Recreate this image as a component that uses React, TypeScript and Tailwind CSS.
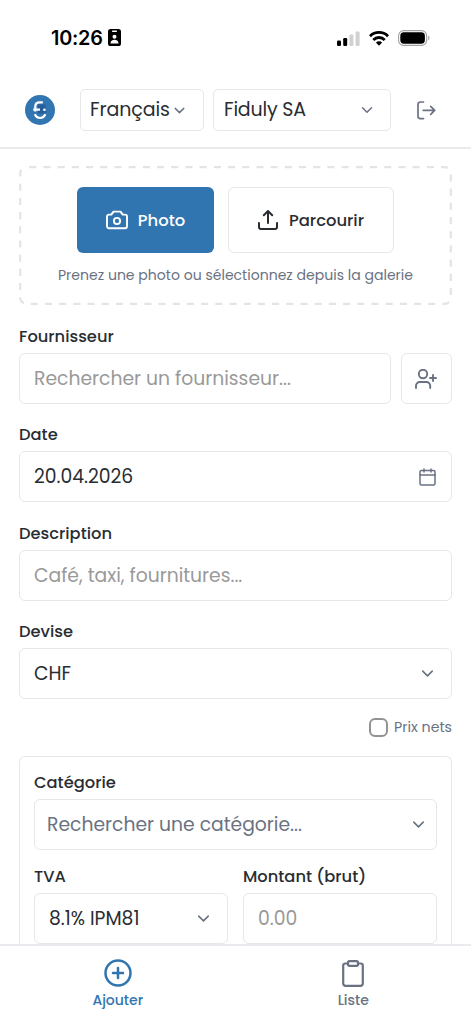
import type { ReactNode } from "react";
import { ChevronDown, CirclePlus } from "lucide-react";

const StatusBar = () => (
  <div className="flex h-[76px] items-center justify-between pl-[51px] pr-[41px]">
    <div className="flex items-center gap-[5px]">
      <span className="pt-[2px] font-['Inter',sans-serif] text-[19.8px] font-semibold leading-none tracking-[-0.2px] text-black">10:26</span>
      <svg width="13" height="17" viewBox="0 0 13 17">
        <rect width="13" height="17" rx="2.6" fill="#000" />
        <rect x="4" y="1.6" width="5" height="1.3" rx=".6" fill="#fff" />
        <circle cx="6.5" cy="7.8" r="2" fill="#fff" />
        <path d="M2.5 14.5c0-2.6 1.6-3.8 4-3.8s4 1.2 4 3.8z" fill="#fff" />
      </svg>
    </div>
    <div className="flex items-center gap-[9px]">
      <svg width="23" height="15" viewBox="0 0 23 15">
        <rect x="0" y="9.5" width="4" height="5.5" rx="1.2" fill="#000" />
        <rect x="6.2" y="7" width="4" height="8" rx="1.2" fill="#000" />
        <rect x="12.4" y="3.6" width="4" height="11.4" rx="1.2" fill="#d1d1d1" />
        <rect x="18.6" y="0.5" width="4" height="14.5" rx="1.2" fill="#d1d1d1" />
      </svg>
      <svg width="20" height="15" viewBox="0 0 20 15" fill="none" stroke="#000" strokeWidth="2.8">
        <path d="M1 5.2a12.7 12.7 0 0 1 18 0" />
        <path d="M4.3 8.9a8 8 0 0 1 11.4 0" />
        <path d="M10 14.8l-3.1-3.2a4.3 4.3 0 0 1 6.2 0z" fill="#000" stroke="none" />
      </svg>
      <svg width="32" height="16" viewBox="0 0 32 16">
        <rect x=".6" y=".6" width="28" height="14.8" rx="5" fill="none" stroke="#a3a3a3" strokeWidth="1.1" />
        <rect x="2.3" y="2.3" width="24.6" height="11.4" rx="3.6" fill="#000" />
        <path d="M30.2 5.6c1.6.6 1.6 4.2 0 4.8z" fill="#a3a3a3" />
      </svg>
    </div>
  </div>
);

const Logo = () => (
  <svg width="30" height="30" viewBox="0 0 30 30">
    <circle cx="15" cy="15" r="15" fill="#3276b1" />
    <path d="M13 9.5h7.5v9H13z" fill="#245f9c" />
    <g fill="none" stroke="#fff" strokeWidth="2.2">
      <path d="M17.8 7.3h-3c-3 0-4.5 1.6-4.5 4.2v5" />
      <path d="M8.2 14.6h6.8" />
      <path d="M9.9 19.2c.9 2.6 2.8 3.8 5.2 3.8s4.3-1.2 5.2-3.8" />
    </g>
    <circle cx="19.4" cy="14.8" r="1.3" fill="#fff" />
  </svg>
);

const Header = () => (
  <header className="flex h-[73px] items-start border-b-2 border-[#ebebed] pl-[25px] pt-[13px]">
    <div className="mt-[6px]">
      <Logo />
    </div>
    <div className="ml-[25px] flex h-[42px] w-[124px] items-center rounded-[5px] border border-gray-200 pl-[9px]">
      <span className="text-[19px] tracking-[-0.1px]">Français</span>
      <ChevronDown className="ml-px text-gray-500" size={17} />
    </div>
    <div className="ml-[9px] flex h-[42px] w-[178px] items-center justify-between rounded-[5px] border border-gray-200 pl-[10px] pr-[14px]">
      <span className="text-[19px] tracking-[-0.2px]">Fiduly SA</span>
      <ChevronDown className="text-gray-500" size={18} />
    </div>
    <svg className="ml-[26px] mt-[12px] text-gray-500" width="19" height="19" viewBox="0 0 19 19" fill="none" stroke="currentColor" strokeWidth="1.7" strokeLinecap="round" strokeLinejoin="round">
      <path d="M6.5 1H3.2A2.2 2.2 0 0 0 1 3.2v12.2a2.2 2.2 0 0 0 2.2 2.2h3.3" />
      <path d="M6.2 9.3h11.5M13.7 5.3l4 4-4 4" />
    </svg>
  </header>
);

const UploadZone = () => (
  <div className="relative flex h-[139px] flex-col items-center pt-[21px]">
    <svg className="absolute inset-0" width="433" height="139" fill="none">
      <rect x="1.2" y="1.2" width="430.6" height="136.6" rx="6" stroke="#e2e5e7" strokeWidth="2.2" strokeDasharray="7.1 7.1" strokeDashoffset="-3" />
    </svg>
    <div className="flex gap-[14px]">
      <button className="flex h-[66px] w-[137px] items-center justify-center gap-[10px] rounded-md bg-[#3175b0] text-white">
        <svg width="22" height="20" viewBox="0 0 22 20" fill="none" stroke="currentColor" strokeWidth="1.9" strokeLinejoin="round">
          <path d="M7.5 1.6h7l2.2 3h2.4a1.9 1.9 0 0 1 1.9 1.9v9.8a1.9 1.9 0 0 1-1.9 1.9H2.9A1.9 1.9 0 0 1 1 16.3V6.5a1.9 1.9 0 0 1 1.9-1.9h2.4z" />
          <circle cx="11" cy="11" r="3.1" />
        </svg>
        <span className="pt-[2px] text-[16.4px] font-medium">Photo</span>
      </button>
      <button className="flex h-[66px] w-[166px] items-center justify-center gap-[11px] rounded-md border border-gray-200">
        <svg width="20" height="20" viewBox="0 0 20 20" fill="none" stroke="currentColor" strokeWidth="2" strokeLinecap="round" strokeLinejoin="round">
          <path d="M1 13v4a2 2 0 0 0 2 2h14a2 2 0 0 0 2-2v-4" />
          <path d="M10 13V1M5.8 5.2L10 1l4.2 4.2" />
        </svg>
        <span className="pt-[2px] text-[16.4px] font-medium">Parcourir</span>
      </button>
    </div>
    <p className="mt-[11px] whitespace-nowrap text-[14.05px] leading-[22px] text-gray-500">
      Prenez une photo ou sélectionnez depuis la galerie
    </p>
  </div>
);

const Label = ({ children }: { children: ReactNode }) => (
  <div className="h-[26px] whitespace-nowrap text-[16.3px] font-medium leading-[20px]">{children}</div>
);

const Box = ({ className = "px-[14px]", children }: { className?: string; children: ReactNode }) => (
  <div className={`flex h-[51px] items-center justify-between whitespace-nowrap rounded-md border border-gray-200 text-[18.75px] [&>span]:pt-[2px] ${className}`}>
    {children}
  </div>
);

const BottomNav = () => (
  <nav className="grid h-[80px] shrink-0 grid-cols-2 border-t-2 border-[#e9ebee] bg-white">
    <div className="flex flex-col items-center pt-[12px] text-[#3175b0]">
      <CirclePlus size={30} strokeWidth={2} />
      <span className="mt-[2px] text-[14px] font-medium leading-[20px]">Ajouter</span>
    </div>
    <div className="flex flex-col items-center pt-[14px] text-gray-500">
      <svg width="22" height="27" viewBox="0 0 22 27" fill="none" stroke="currentColor" strokeWidth="2.2" strokeLinejoin="round">
        <path d="M6 3.5H3.2A2 2 0 0 0 1.2 5.5v18.1a2.2 2.2 0 0 0 2.2 2.2h15.2a2.2 2.2 0 0 0 2.2-2.2V5.5A2 2 0 0 0 18.8 3.5H16" />
        <rect x="6" y="1.2" width="10" height="4.6" rx="1.5" />
      </svg>
      <span className="mt-[3px] text-[14px] font-medium leading-[20px]">Liste</span>
    </div>
  </nav>
);

const App = () => {
  return (
    <div className="flex h-[1024px] w-[471px] flex-col overflow-hidden bg-white font-['Poppins','Inter',sans-serif] text-[#292d32]">
      <StatusBar />
      <Header />
      <main className="min-h-0 flex-1 overflow-hidden px-[19px] pt-[17px]">
        <UploadZone />

        <div className="mt-[22px]">
          <Label>Fournisseur</Label>
          <div className="flex gap-[10px]">
            <Box className="flex-1 px-[14px]">
              <span className="text-[#999]">Rechercher un fournisseur...</span>
            </Box>
            <Box className="w-[51px] px-[13px] text-gray-500">
              <svg className="shrink-0" width="22" height="20" viewBox="0 0 22 20" fill="none" stroke="currentColor" strokeWidth="1.9" strokeLinecap="round">
                <circle cx="8" cy="5" r="4.2" />
                <path d="M1 19v-2.2A3.8 3.8 0 0 1 4.8 13h6.6a3.8 3.8 0 0 1 3.8 3.8V19M18 6v6M15 9h6" />
              </svg>
            </Box>
          </div>
        </div>

        <div className="mt-[21px]">
          <Label>Date</Label>
          <Box>
            <span>20.04.2026</span>
            <svg className="mr-px text-gray-500" width="17" height="18" viewBox="0 0 17 18" fill="none" stroke="currentColor" strokeWidth="1.5" strokeLinecap="round">
              <rect x="1" y="2.5" width="15" height="14.5" rx="1.5" />
              <path d="M1 7h15M5 1v3M12 1v3" />
            </svg>
          </Box>
        </div>

        <div className="mt-[22px]">
          <Label>Description</Label>
          <Box>
            <span className="text-[#999]">Café, taxi, fournitures...</span>
          </Box>
        </div>

        <div className="mt-[21px]">
          <Label>Devise</Label>
          <Box>
            <span>CHF</span>
            <ChevronDown className="text-gray-500" size={19} />
          </Box>
        </div>

        <div className="mt-[17px] flex h-[22px] items-center justify-end gap-[6px]">
          <span className="h-[19px] w-[19px] rounded-[6px] border-2 border-[#929292]" />
          <span className="pt-px text-[14.2px] text-gray-500">Prix nets</span>
        </div>

        <div className="mt-[18px] rounded-t-md border border-b-0 border-gray-200 px-[14px] pt-[16px]">
          <Label>Catégorie</Label>
          <Box className="pl-[12px] pr-[8px] text-gray-500">
            <span>Rechercher une catégorie...</span>
            <ChevronDown size={19} />
          </Box>
          <div className="mt-[17px] grid grid-cols-2 gap-[15px]">
            <div>
              <Label>TVA</Label>
              <Box>
                <span>8.1% IPM81</span>
                <ChevronDown className="text-gray-500" size={19} />
              </Box>
            </div>
            <div>
              <Label>Montant (brut)</Label>
              <Box>
                <span className="text-[#999]">0.00</span>
              </Box>
            </div>
          </div>
        </div>
      </main>
      <BottomNav />
    </div>
  );
};

export default App;
